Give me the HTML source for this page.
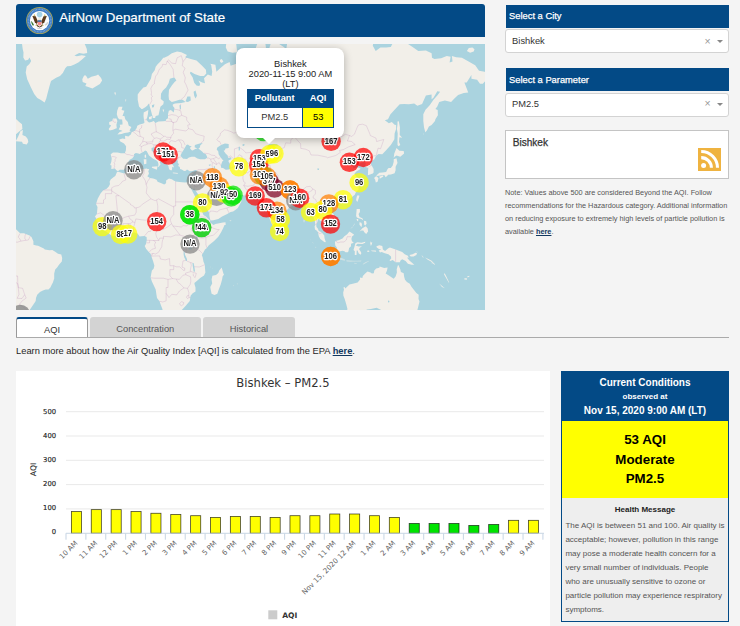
<!DOCTYPE html>
<html lang="en"><head><meta charset="utf-8"><title>AirNow Department of State</title>
<style>
*{box-sizing:border-box;margin:0;padding:0}
html,body{width:740px;height:626px;overflow:hidden;background:#f4f4f4}
body{position:relative;font-family:"Liberation Sans",Arial,Helvetica,sans-serif;color:#333;-webkit-font-smoothing:antialiased}
.abs{position:absolute}
.hdr{left:16px;top:4px;width:469px;height:33px;background:#034a86;border-radius:3px 3px 0 0;color:#fff;font-size:13.33px;line-height:33px}
.hdr span{position:absolute;left:43.2px;top:-2.7px;white-space:nowrap;-webkit-text-stroke:.2px #fff}
.seal{position:absolute;left:9.5px;top:2.5px;transform:translate(-.4px,-.4px)}
.map{position:absolute;left:16px;top:44px;display:block}
.map .geo{filter:blur(.3px)}
.map .lab{filter:blur(.28px)}
.popup{left:236.4px;top:48px;width:108px;height:90.1px;background:#fff;border-radius:8px;box-shadow:0 2px 8px rgba(0,0,0,.28);font-size:9.3px;line-height:10.1px;text-align:center;color:#222}
.popup .tip{position:absolute;left:26.4px;top:89.8px;width:0;height:0;border-left:6.3px solid transparent;border-right:6.3px solid transparent;border-top:6.6px solid #fff}
.popup .txt{position:absolute;left:0;right:0;top:10.5px}
.ptab{position:absolute;left:10.5px;top:41.3px;width:86.9px;height:38.6px;border:1px solid #034a86;background:#fff}
.ptab div{position:absolute;font-size:9.33px;line-height:18px;text-align:center}
.ptab .h{top:-1px;height:18.4px;background:#034a86;color:#fff;font-weight:bold}
.ptab .c1{left:-1px;width:55.6px}
.ptab .c2{left:54.6px;width:31.3px}
.ptab .d{top:17.4px;height:20.2px;line-height:19.6px;color:#333}
.ptab .d.c2{background:#ffff00;color:#000;border-left:1px solid #034a86;width:30.3px;height:19.2px}
.sh{left:505.5px;width:223.5px;height:23px;background:#034a86;color:#fff;font-size:9.33px;line-height:22px;padding-left:3.6px;font-weight:normal;-webkit-text-stroke:.25px #fff}
.sel{left:505.1px;width:224.2px;height:24px;background:#fff;border:1px solid #d3d3d3;border-radius:3px;font-size:9.33px;line-height:20.6px;padding-left:6px;color:#333}
.sel i{position:absolute;right:17.6px;top:-.6px;font-style:normal;color:#999;font-size:10.5px}
.sel b{position:absolute;right:4.9px;top:9.6px;width:0;height:0;border-left:3.1px solid transparent;border-right:3.1px solid transparent;border-top:3.1px solid #888}
.box{left:505.1px;top:130px;width:224.2px;height:48.6px;background:#fff;border:1px solid #c4c4c4;font-size:10.1px;color:#333;-webkit-text-stroke:.25px #333}
.box span{position:absolute;left:6.6px;top:6.3px;line-height:11px}
.rss{position:absolute;left:191.7px;top:17.2px}
.note{left:505px;top:185.9px;width:226px;font-size:7.33px;line-height:13.1px;color:#555;white-space:nowrap}
.note b,.learn b{color:#12385f;text-decoration:underline;font-weight:bold}
.tabline{left:16px;top:337px;width:713px;height:1px;background:#aaa;z-index:3}
.tab{top:317.4px;height:20px;font-size:9.33px;line-height:25.4px;text-align:center;color:#555;background:#d3d3d3;border-radius:3px 3px 0 0}
.tab.on{left:16px;width:72px;background:#fff;border:1px solid #999;border-bottom:0;border-top:2px solid #034a86;color:#333;line-height:22.4px;height:20.6px}
.learn{left:16px;top:344.8px;font-size:9.33px;line-height:13px;color:#262626;white-space:nowrap}
.cpanel{left:16px;top:371px;width:534px;height:255px;background:#fff}
.chart{position:absolute;left:0;top:0}
.cc{left:560.8px;top:370.6px;width:168.4px;height:251.6px;border:1px solid #034a86;background:#eee;text-align:center}
.cc .top{position:absolute;left:-1px;right:-1px;top:-1px;height:51.2px;background:#034a86;color:#fff;font-weight:bold}
.cc .top div{position:absolute;left:0;right:0;white-space:nowrap}
.cc .mid{position:absolute;left:0;right:0;top:49.8px;height:76.8px;background:#ffff00;color:#000;font-size:13.33px;font-weight:bold;line-height:19.1px;padding-top:9.1px}
.cc .hm{position:absolute;left:0;right:0;top:132.4px;font-size:8px;line-height:11px;color:#222;font-weight:bold}
.cc .msg{position:absolute;left:3.6px;top:147.4px;width:170px;text-align:left;font-size:8px;line-height:14.05px;color:#555;white-space:nowrap}
</style></head><body>
<div class="abs hdr"><svg class="seal" width="28" height="28" viewBox="-14 -14 28 28">
<circle r="13.5" fill="#a3a25c"/><circle r="12.65" fill="#3c7ac2"/><circle r="11.3" fill="none" stroke="#79a6da" stroke-width="1.5" stroke-dasharray=".8 .7"/>
<circle r="9.7" fill="#fdfdfd"/>
<circle cx="0" cy="-6" r="2.8" fill="#a5d2e6"/>
<path d="M-7.2,-4.6L-3.9,-4.3L-1.5,1.2L-2.9,3.4L-4.8,1.6Z" fill="#5b3a1c"/>
<path d="M7.2,-4.6L3.9,-4.3L1.5,1.2L2.9,3.4L4.8,1.6Z" fill="#5b3a1c"/>
<path d="M-6.2,-4.8L-5.2,-6.6L-4.2,-4.6ZM6.2,-4.8L5.2,-6.6L4.2,-4.6Z" fill="#cdbb5c"/>
<path d="M-1.3,-2.4H1.3L1.9,1L0,2L-1.9,1Z" fill="#efe9dc"/>
<path d="M-1.9,.9H1.9V3.9Q0,5.7-1.9,3.9Z" fill="#f08a8a"/><rect x="-1.9" y="-.3" width="3.8" height="1.5" fill="#2c5f9e"/>
<path d="M-3.4,3.4L0,6.2L3.4,3.4L2.6,5.6L0,6.8L-2.6,5.6Z" fill="#4a3018"/>
<path d="M-8.5,.2C-7.4,1.4-6.2,3-5.5,4.6L-7,4.8C-7.9,3.6-8.5,2-8.5,.2Z" fill="#3c7d3a"/>
<path d="M5.2,4.4L8.2,1.4M5.8,4.8L8.6,2.6" stroke="#bdbdbd" stroke-width=".7"/>
<path d="M-4,4.8L-2,4.2M4,4.8L2,4.2" stroke="#c9b452" stroke-width=".8"/>
<path d="M-3,6.6Q0,8.4 3,6.6L2.4,7.8Q0,9-2.4,7.8Z" fill="#d4d4d4"/>
</svg><span>AirNow Department of State</span></div>
<svg class="map" width="469" height="266" viewBox="16 44 469 266">
<rect x="16" y="44" width="469" height="266" fill="#aad3df"/>
<g class="geo"><path d="M177.1,51.6L181.3,52.2L187.0,55.0L185.1,57.3L190.8,58.9L196.5,60.5L202.1,65.7L205.9,69.7L206.3,73.6L204.0,76.0L200.2,76.0L194.6,74.1L190.8,71.7L189.8,73.1L192.7,77.4L194.2,82.8L196.5,85.4L199.3,85.9L200.2,84.1L198.4,80.6L202.1,82.4L205.0,83.2L204.0,78.3L207.8,74.6L211.6,76.0L212.2,71.7L211.2,65.2L210.3,63.7L215.4,64.7L216.4,71.7L220.2,68.2L224.9,64.2L229.6,62.1L230.6,65.7L236.3,63.7L242.0,61.6L242.9,57.3L249.6,60.0L253.3,62.6L257.1,64.7L259.0,62.1L255.2,58.3L254.9,50.5L258.1,41.4L260.9,36.2L264.7,38.2L265.9,47.5L266.2,58.9L267.8,65.2L264.7,74.1L268.5,71.7L269.1,64.2L273.3,62.6L276.1,68.7L277.0,66.7L274.2,61.6L269.5,56.1L269.5,47.5L271.4,41.4L276.1,41.4L279.9,44.5L284.6,47.5L285.6,53.3L287.5,55.0L286.5,47.5L287.5,41.4L287.5,-0.1L327.3,-0.1L342.5,16.8L342.5,34.2L352.0,36.2L361.4,34.9L369.0,34.2L373.8,39.5L372.8,45.7L375.7,51.0L380.4,47.5L386.1,47.5L390.8,46.9L393.3,42.0L395.6,39.5L405.0,42.0L412.6,46.9L418.3,51.0L425.9,50.5L431.6,53.3L432.0,57.8L434.4,58.9L441.1,58.3L446.8,56.1L450.6,56.7L449.6,62.6L452.5,61.6L451.9,56.1L456.2,57.3L461.9,57.8L469.5,62.1L475.2,65.2L479.0,70.7L484.7,71.7L489.1,76.0L487.5,78.8L482.8,83.7L480.0,83.7L477.1,79.7L471.4,78.8L471.4,75.0L466.7,82.4L464.4,82.4L466.7,88.4L468.2,92.6L463.8,93.0L458.1,95.0L454.4,98.5L451.1,102.0L444.9,100.5L439.2,102.0L437.3,106.4L435.4,109.0L437.7,110.0L437.9,115.3L435.4,119.3L435.0,120.9L431.6,125.1L428.9,126.4L426.9,130.4L425.3,132.2L424.0,127.3L423.3,120.9L423.3,114.2L425.5,109.7L429.7,105.3L433.5,99.7L437.3,95.4L440.1,91.8L437.3,91.3L433.5,97.8L431.6,99.3L431.6,94.6L425.9,95.4L422.1,103.9L417.4,105.7L414.2,103.5L408.8,104.2L404.1,103.9L399.7,104.2L394.6,109.7L390.3,114.6L388.0,119.3L384.8,120.3L388.9,123.2L391.8,121.9L394.6,124.8L396.1,125.1L396.1,128.9L394.6,133.4L394.4,139.2L390.8,144.9L386.1,150.3L382.3,154.2L378.5,154.0L376.0,156.0L374.3,159.3L370.0,162.3L371.7,165.5L373.6,169.1L373.6,172.6L372.8,173.5L370.0,174.5L367.9,175.2L368.1,170.3L368.3,167.9L365.2,166.7L365.8,163.0L363.9,161.8L360.5,163.0L358.0,164.8L359.2,159.8L357.6,159.6L353.8,163.8L351.4,164.3L352.9,166.7L353.8,168.4L357.3,167.2L360.5,168.4L360.1,169.3L356.3,171.4L354.4,173.8L356.3,176.5L357.6,179.5L359.3,182.8L357.6,184.1L359.5,185.0L358.6,187.2L358.6,189.4L355.7,192.6L354.8,194.7L352.3,196.8L350.1,198.8L347.2,200.5L344.7,201.3L342.5,201.9L339.6,202.9L337.5,203.3L337.4,205.4L336.2,202.9L333.9,202.5L331.1,204.0L329.2,206.0L328.8,208.0L330.1,210.4L332.0,213.0L333.6,214.0L335.3,217.9L335.6,220.8L334.9,222.7L332.0,224.7L330.5,225.6L328.2,227.6L326.9,228.3L327.3,225.6L326.0,224.7L324.5,224.3L323.5,222.7L322.2,221.4L319.7,220.4L319.5,219.1L318.8,218.9L317.8,219.2L317.6,221.8L316.3,224.7L316.5,227.0L317.8,228.5L318.8,231.0L320.7,231.8L322.2,232.9L324.3,235.6L324.5,238.1L325.8,242.0L325.0,242.2L324.3,241.9L322.0,240.3L320.3,239.0L318.8,236.2L318.4,234.3L318.0,232.3L316.9,230.8L315.0,229.5L314.6,226.6L315.2,224.7L315.0,221.8L314.0,217.9L313.5,214.9L313.1,213.0L311.8,212.0L309.3,214.4L307.0,214.0L307.4,211.0L306.4,208.0L305.5,206.0L303.2,204.0L302.3,201.3L299.8,200.9L297.0,202.3L295.1,202.5L293.2,203.3L293.0,204.6L291.8,206.2L289.4,207.4L287.5,209.4L284.3,212.8L282.2,214.2L280.3,214.9L279.9,217.9L280.5,219.8L279.5,221.8L279.5,225.1L278.0,227.0L276.5,227.8L275.2,229.3L273.3,227.6L272.3,224.7L270.8,221.8L270.0,219.8L269.1,216.9L268.1,214.9L267.2,212.0L266.2,208.0L266.1,204.0L265.9,201.3L264.7,203.5L262.8,204.4L260.9,204.0L259.0,201.5L261.5,199.9L258.1,199.2L256.2,197.8L255.2,196.1L254.3,194.9L249.6,195.3L244.8,195.5L240.1,194.9L236.8,194.0L235.9,191.3L235.0,191.3L231.5,192.3L228.7,191.5L225.8,189.6L224.5,187.2L223.0,184.6L221.1,184.1L220.2,185.0L219.2,186.1L220.2,188.3L222.1,191.1L223.4,192.6L223.4,194.7L224.5,196.1L225.3,193.4L226.0,195.1L226.0,197.2L227.7,197.4L230.6,197.4L233.1,195.1L234.6,193.4L235.1,193.0L235.1,195.7L236.3,197.8L239.3,198.6L241.6,200.9L239.5,205.0L237.8,208.0L235.3,210.0L233.1,211.4L230.6,212.0L227.2,214.0L222.1,216.5L218.3,218.9L213.5,220.2L210.7,220.4L210.1,219.2L209.4,215.9L209.2,213.0L207.5,210.0L205.9,207.0L203.3,204.0L202.3,202.9L201.2,198.8L198.9,195.7L197.4,193.2L195.5,190.4L194.2,188.3L194.6,186.1L193.4,189.4L193.0,190.0L191.7,188.3L190.0,185.2L189.4,182.2L192.3,182.6L193.6,181.7L194.4,178.8L195.5,176.3L196.1,172.6L196.8,170.0L195.1,170.0L192.7,171.0L189.8,171.2L187.0,169.6L185.8,170.7L184.1,171.0L181.7,169.6L180.1,169.1L179.8,166.9L178.1,166.0L179.0,164.3L177.7,162.8L177.9,161.3L177.5,160.3L175.6,159.6L173.7,159.8L173.7,161.8L172.8,161.3L171.6,160.6L171.2,163.0L172.2,164.3L173.7,166.2L173.7,167.4L172.2,166.7L172.2,167.9L171.8,170.3L170.7,170.3L169.3,169.6L168.6,167.2L168.4,166.0L167.4,164.8L166.5,162.8L165.0,160.6L165.2,157.5L163.3,155.5L162.3,155.0L159.5,152.9L157.0,151.1L155.7,148.4L154.0,148.9L154.2,147.0L151.5,148.1L151.7,150.8L153.8,152.6L155.1,155.5L158.5,157.0L158.5,158.3L160.4,159.3L163.3,161.3L162.3,162.1L160.4,160.6L159.7,162.3L160.6,164.3L159.5,165.7L158.5,166.9L158.0,166.7L158.5,164.3L157.8,161.8L156.3,160.3L155.1,159.8L152.8,158.6L151.3,157.3L149.0,155.5L147.7,152.9L146.8,151.3L145.1,150.5L143.4,151.9L142.0,152.4L139.6,154.0L138.4,153.4L135.8,152.9L133.9,154.2L134.3,155.8L132.4,158.3L129.7,159.8L127.6,163.0L128.4,164.8L127.1,166.7L124.8,169.1L124.0,169.8L119.8,169.8L117.9,171.2L116.4,170.3L114.9,168.6L111.3,169.1L111.5,165.5L110.2,165.0L111.3,161.8L111.7,158.8L110.7,154.2L113.0,152.4L117.4,152.6L121.0,153.2L124.8,153.2L125.9,150.3L126.1,146.2L124.0,143.5L120.0,141.2L119.3,139.5L122.5,138.4L125.2,139.0L125.0,135.8L128.4,136.4L131.0,134.3L131.6,132.2L134.8,130.7L136.7,127.9L137.3,125.7L139.6,124.5L143.4,123.5L144.5,122.6L143.9,119.3L143.5,115.9L143.7,112.5L148.3,110.0L147.9,114.2L147.2,117.6L146.4,119.3L147.5,121.3L149.0,122.6L151.3,121.9L153.8,120.9L155.3,122.9L158.5,121.6L163.5,121.3L165.7,120.9L166.1,119.6L168.0,118.3L168.0,114.2L168.8,110.8L170.9,110.0L173.7,112.5L174.5,107.9L172.8,106.1L172.8,104.6L175.0,103.5L181.3,103.1L185.5,102.0L182.6,99.7L179.4,99.7L175.6,100.9L171.8,102.0L169.0,99.7L168.6,95.8L169.0,89.7L171.8,85.4L174.6,81.9L176.4,80.6L174.6,77.8L173.9,77.4L169.9,78.8L168.6,83.2L166.1,87.6L162.9,90.5L161.0,93.8L160.8,98.9L163.8,101.6L163.3,104.2L160.4,106.8L159.5,110.8L158.5,115.3L155.7,115.9L155.1,118.0L152.8,118.0L152.5,115.9L151.9,114.2L150.8,110.0L149.4,105.3L148.3,103.5L147.7,105.3L145.3,107.2L142.4,109.0L141.5,109.0L139.0,106.4L138.6,104.2L137.7,99.7L137.7,94.6L139.6,91.8L143.4,87.6L146.2,86.7L148.7,82.4L150.9,78.8L151.9,74.1L154.7,70.2L155.7,66.7L157.6,64.2L160.4,61.6L163.3,57.8L164.2,57.8L168.0,56.1L171.8,53.3ZM189.4,182.2L184.9,182.4L179.4,181.9L175.6,181.5L173.7,180.4L171.8,179.2L169.0,178.6L166.1,180.4L166.1,183.3L164.2,184.4L161.4,183.3L157.6,181.7L156.6,179.7L153.2,178.6L150.0,177.9L147.3,176.3L148.3,174.9L149.0,173.3L148.3,171.4L149.2,169.1L147.5,169.1L146.8,168.4L143.4,169.1L139.6,169.3L133.9,169.6L130.1,170.5L127.1,172.1L124.4,173.5L122.5,173.1L118.1,171.7L117.0,171.9L115.3,176.1L113.8,177.0L110.7,179.5L109.6,181.7L110.0,184.1L108.8,186.5L106.4,188.9L103.5,190.0L100.7,193.2L97.8,198.4L96.0,204.0L97.5,207.0L96.9,214.0L95.0,216.5L96.5,218.9L96.3,221.2L98.6,222.0L99.7,223.9L102.2,226.6L103.2,228.5L104.5,230.6L107.7,232.7L111.1,235.2L114.0,236.3L116.8,235.6L120.6,234.6L124.4,235.6L127.8,234.1L130.5,233.1L134.6,232.5L137.7,233.7L139.6,236.5L141.5,236.3L144.3,236.0L146.6,237.1L146.8,240.0L146.2,242.8L146.0,243.9L144.7,246.0L146.2,249.1L149.0,252.3L150.6,253.8L151.3,256.1L153.2,261.5L154.4,265.7L153.6,268.8L151.9,270.5L151.3,273.5L150.6,277.4L151.9,281.4L153.8,285.4L155.7,289.5L156.3,293.7L157.0,297.9L159.5,301.3L161.0,305.5L162.3,308.8L162.9,311.1L163.1,313.3L166.1,315.2L169.9,313.3L176.7,313.3L179.4,312.2L181.3,310.6L183.2,308.4L186.0,305.5L187.0,304.2L189.8,301.1L190.6,295.8L192.7,293.3L195.5,291.6L195.5,287.5L194.6,284.4L194.4,283.0L197.4,280.4L200.2,278.0L204.0,275.4L205.4,272.5L205.0,268.6L204.8,264.7L203.5,261.8L202.7,257.6L201.8,255.1L203.5,252.3L205.0,249.4L206.9,247.9L208.8,245.3L214.1,240.9L218.3,236.7L221.1,232.3L223.0,228.5L224.5,225.1L225.7,224.9L225.5,222.2L223.0,222.6L219.2,223.3L215.4,224.1L213.5,224.9L210.7,222.7L209.9,222.6L210.3,220.8L208.6,219.2L205.9,216.5L203.5,214.9L201.4,210.0L199.1,208.0L198.7,206.8L198.4,202.9L196.1,198.8L194.2,194.7L192.7,191.9L192.3,191.1L191.1,188.9L189.8,185.2ZM221.7,267.6L223.4,273.5L224.0,274.5L222.6,276.4L222.1,279.4L220.7,284.4L218.8,289.5L217.3,293.7L214.5,294.9L211.6,293.7L210.7,289.5L210.3,287.1L212.2,283.4L211.6,279.4L212.4,275.8L216.0,274.9L218.3,273.1L219.2,270.5ZM117.4,134.6L121.6,134.0L124.4,133.1L128.2,132.5L130.8,131.3L129.5,130.4L131.4,127.0L128.8,125.7L128.2,123.8L127.8,121.9L125.3,119.3L124.4,115.9L122.5,115.9L124.4,110.8L121.6,110.0L122.5,106.8L118.7,106.8L117.2,110.8L116.8,114.2L117.8,117.6L119.1,119.3L122.1,119.6L122.5,122.6L122.5,124.5L119.7,124.8L120.2,126.4L118.7,129.5L121.6,130.4L122.5,131.0L119.7,131.9ZM116.8,128.2L116.4,124.8L117.4,120.9L116.4,118.6L113.0,118.6L112.1,120.9L109.2,121.9L109.2,124.5L111.1,125.4L108.7,128.9L109.6,130.4L113.0,129.8L115.9,128.6ZM225.8,47.5L227.7,51.6L232.5,52.8L237.2,52.2L236.3,44.5L234.4,31.5L226.8,38.2ZM219.8,60.0L221.7,58.9L223.4,61.6L221.7,63.1L220.2,62.1ZM466.9,51.0L468.8,48.1L472.4,47.5L474.5,49.3L473.7,51.6L470.1,52.8ZM393.7,158.1L394.2,153.7L396.5,148.1L399.4,150.8L403.7,151.1L404.1,153.4L400.3,156.8L396.5,155.5L394.6,156.8ZM396.5,158.3L397.5,163.0L395.6,166.7L395.6,170.3L394.6,173.3L393.3,173.8L390.8,174.5L388.0,174.7L387.6,175.4L385.7,177.2L384.2,174.9L380.4,175.4L376.6,176.1L376.6,175.2L379.4,172.8L382.3,172.6L386.1,172.1L387.6,169.1L388.6,167.9L390.8,168.1L392.7,165.5L393.7,161.8L393.7,159.3ZM376.6,176.3L378.5,178.3L377.6,181.7L375.8,182.6L375.1,179.5L374.1,177.9L375.7,176.5ZM379.4,176.5L383.2,175.6L383.2,176.8L381.3,177.7L379.8,178.8ZM397.5,121.6L398.8,121.3L399.9,127.3L399.7,134.9L402.2,137.8L399.4,137.2L399.0,142.1L400.3,144.9L398.4,146.2L397.5,144.9L397.5,139.2L397.7,133.4L396.9,128.9L397.5,124.2ZM357.6,195.3L359.5,195.7L358.6,198.8L357.3,201.9L356.1,199.9L356.7,196.8ZM334.3,207.6L335.8,206.0L338.7,206.0L337.7,208.4L335.8,209.6L334.3,209.0ZM279.9,226.0L282.2,228.5L283.3,230.8L282.4,232.7L280.8,233.5L279.5,231.8L279.5,229.1ZM356.7,209.0L359.9,209.0L359.9,212.0L358.6,214.0L359.5,216.9L362.4,218.3L363.3,220.6L361.4,218.9L358.6,218.3L356.9,217.5L356.1,215.9L356.3,213.4ZM359.5,231.4L362.4,228.3L365.8,226.2L367.7,228.5L368.1,231.4L367.1,232.7L366.2,233.9L364.3,232.3L363.3,230.4L361.4,230.4ZM363.9,220.8L366.2,221.2L366.6,223.7L365.2,225.6L364.3,224.7L364.1,222.7ZM359.5,222.2L361.4,222.7L362.0,224.7L361.4,227.2L360.5,226.0L359.5,224.7ZM350.4,228.7L352.9,226.4L354.8,223.1L354.2,224.9L352.0,227.8ZM356.5,219.1L358.2,219.1L358.2,221.2L357.3,221.0ZM334.9,241.9L335.8,240.9L339.2,240.0L342.5,238.6L344.4,236.2L347.2,234.3L349.5,231.4L351.4,232.7L354.2,234.8L352.0,236.5L351.4,239.0L352.0,241.3L353.8,242.8L351.0,243.8L351.0,246.2L349.1,248.1L348.5,251.3L347.8,252.3L345.5,252.3L344.4,251.2L342.5,250.8L340.2,251.2L337.2,250.2L336.8,247.5L335.3,245.6ZM355.4,243.2L357.3,242.2L361.4,242.8L365.2,241.7L365.2,242.8L362.4,243.9L357.6,243.8L355.7,245.6L358.6,246.6L362.0,246.2L359.5,248.1L359.2,249.4L360.5,251.3L361.4,253.2L360.5,254.8L358.6,253.2L357.6,250.4L356.7,250.4L356.5,255.1L354.8,255.1L354.8,251.3L353.5,250.0L354.4,247.0ZM370.0,240.9L370.9,242.8L372.2,241.9L371.9,244.1L370.9,246.0L370.3,243.8ZM370.9,250.4L375.7,250.4L376.2,251.7L371.9,251.3ZM367.1,250.8L369.0,250.6L369.4,251.7L367.5,251.9ZM376.4,246.2L379.4,245.3L382.3,246.0L382.9,249.4L385.1,251.0L388.0,248.5L389.9,247.5L395.6,249.6L402.2,251.9L404.7,254.2L407.9,255.7L408.7,257.8L406.9,257.6L409.4,260.5L412.3,263.0L414.3,264.7L411.7,264.7L407.9,263.8L405.6,261.1L402.2,259.2L400.5,260.5L399.9,262.2L395.6,262.2L392.7,260.1L390.3,260.9L389.5,260.3L391.2,258.4L391.0,256.5L388.4,254.2L384.8,253.2L381.7,252.1L380.0,252.5L378.7,250.4L381.3,249.6L378.9,248.9L376.8,247.4ZM409.4,255.1L412.6,254.2L415.5,252.7L417.0,252.9L416.4,255.1L413.6,256.5L410.7,256.5ZM414.2,249.6L417.4,251.9L418.3,253.6L417.8,252.7L415.5,250.4ZM421.5,255.1L423.8,257.6L422.7,257.2ZM430.6,262.4L433.1,263.6L432.2,263.4ZM439.2,283.6L443.9,287.5L444.9,288.3L442.0,286.9ZM343.4,287.5L344.7,287.1L345.3,288.5L349.5,284.6L353.8,283.4L357.6,282.4L360.1,279.4L359.9,277.4L362.4,278.0L362.8,276.0L365.2,273.5L367.5,271.5L370.5,272.5L371.9,273.5L373.8,273.3L374.3,270.5L376.2,268.4L379.4,267.8L379.6,266.5L384.2,268.0L387.6,267.6L387.0,270.5L385.7,273.5L388.9,275.4L391.8,277.4L393.7,278.8L395.6,276.4L396.9,272.5L396.7,269.2L397.8,265.5L398.4,265.1L400.3,269.2L400.9,272.1L403.7,273.3L404.1,276.4L405.0,279.8L406.9,282.0L409.8,283.8L411.3,286.5L414.2,290.2L416.4,293.1L418.7,294.7L418.5,299.0L419.5,301.6L418.3,306.6L417.4,309.9L416.0,311.1L414.9,313.1L412.6,320.3L393.7,322.7L389.9,316.8L386.1,315.6L385.1,314.9L382.3,310.6L376.6,307.7L370.9,309.0L367.1,309.5L363.3,311.5L362.4,313.3L355.7,313.3L352.0,315.6L346.6,314.0L347.4,308.8L346.3,304.4L344.7,299.0L343.4,295.8L343.2,292.6L344.0,289.5ZM10.6,227.6L16.3,229.5L20.1,233.3L23.9,233.3L29.6,235.6L31.5,237.1L33.4,241.3L33.4,244.7L36.2,245.6L38.1,245.8L43.8,248.5L44.8,249.4L49.5,250.2L52.3,250.0L55.2,251.7L58.0,253.8L61.3,254.6L62.2,258.2L61.8,261.5L59.0,264.7L57.1,267.6L55.2,269.6L54.2,273.5L54.2,278.4L52.9,282.4L51.8,284.4L50.4,287.5L48.5,289.5L45.7,289.5L42.9,290.6L40.0,292.0L37.2,294.7L36.0,297.9L35.7,301.1L33.4,304.4L30.5,308.8L27.7,312.6L25.8,318.0L6.8,318.0ZM6.8,115.9L13.5,117.6L16.3,119.3L19.2,121.9L22.0,124.2L22.4,128.9L20.1,130.7L16.3,134.0L6.8,134.9ZM15.7,141.2L18.2,136.4L20.5,131.0L22.9,130.1L22.4,134.9L25.8,136.6L27.7,139.0L28.3,142.1L26.7,144.6L22.9,143.8L22.0,141.8ZM151.9,166.7L157.6,166.2L156.8,169.8L151.9,167.7ZM143.7,159.3L146.4,159.3L146.4,163.8L144.1,164.3ZM144.5,155.5L146.0,154.2L146.2,157.5L144.9,158.1ZM172.8,172.6L178.1,173.1L177.5,173.8L172.9,173.3ZM189.4,173.8L193.8,172.1L192.7,174.0L190.2,174.7ZM229.3,220.6L231.5,220.6L230.6,221.2ZM114.2,92.6L115.9,92.6L115.3,95.4ZM125.3,99.3L126.3,99.7L125.7,102.0ZM162.7,109.3L164.2,109.7L163.1,112.5ZM149.0,117.0L152.1,115.9L151.5,119.3L149.0,119.3ZM423.1,133.4L424.0,134.0L423.6,134.6ZM304.0,218.9L304.5,220.8L304.0,222.7L303.6,220.8ZM425.0,257.4L428.8,259.2L431.6,260.7L435.0,264.3L434.4,264.7L431.0,261.5L427.8,259.7ZM444.1,272.9L445.4,274.5L447.3,278.6L449.2,282.4L448.7,282.6L446.4,278.4L444.1,274.5ZM464.4,278.2L466.9,278.2L466.9,279.8L464.4,279.6ZM467.2,276.4L469.5,275.8L469.1,277.0L467.2,277.2ZM21.5,42.8L22.1,44.6L22.7,48.9L23.5,52.5L23.3,57.4L25.1,60.4L28.2,59.8L29.4,57.4L31.2,61.0L29.4,64.1L26.7,66.5L25.7,72.6L27.2,79.3L29.4,84.1L30.6,86.8L34.2,93.9L37.3,98.1L40.9,99.9L44.6,102.6L46.2,98.7L47.4,93.9L49.4,86.6L51.0,81.1L56.1,77.8L60.0,75.9L62.8,72.9L65.3,68.3L67.1,66.3L70.7,65.9L74.4,64.4L78.3,62.5L81.7,59.8L85.9,55.9L81.7,55.2L76.8,56.2L74.4,55.6L79.2,53.1L83.5,53.7L87.2,53.1L86.8,48.9L85.3,45.2L84.1,42.8ZM82.3,79.3L84.1,75.6L85.9,75.4L87.8,78.7L91.4,76.8L96.3,75.4L98.1,74.6L101.1,78.1L102.1,80.5L99.9,84.1L95.7,86.6L92.4,88.4L89.0,87.2L85.3,86.0L86.5,83.5L82.7,81.9Z" fill="#f2efe9"/>
<path d="M328.8,256.7L330.7,256.3L333.9,257.2L337.7,257.6L341.9,258.0L345.1,259.5L344.9,260.7L341.5,260.1L336.8,259.3L333.9,259.0L330.1,258.2ZM346.3,260.3L350.1,260.5L353.8,260.7L357.6,260.7L361.4,260.5L361.1,261.5L355.7,261.6L350.1,261.8L346.6,261.5ZM362.4,264.3L365.2,262.2L369.0,260.7L368.6,261.6L365.2,263.6L363.3,264.5ZM353.8,262.8L356.7,263.2L356.7,264.1L354.2,263.6ZM315.2,246.6L316.3,247.5L316.1,248.3L315.4,247.4ZM312.3,242.0L313.6,243.0L313.3,243.6L312.5,242.8ZM309.9,239.4L311.0,240.0L310.6,240.3ZM232.9,285.2L234.0,285.4L233.6,286.3L233.1,285.9ZM236.8,283.6L237.8,283.6L237.6,284.4L237.0,284.2ZM210.1,266.5L210.7,266.8L210.5,267.4L210.1,267.2ZM212.0,267.8L212.6,268.0L212.6,268.4L212.0,268.2Z" fill="#f2efe9" fill-opacity=".5"/>
<path d="M124.0,173.5L125.0,177.2L125.9,179.9L122.5,181.3L121.2,183.0L118.7,185.5L114.9,186.1L111.7,187.8L111.7,190.9M111.7,190.0L103.2,190.0M111.7,190.9L111.7,193.6L105.4,193.6L105.4,198.8L103.5,199.9L103.5,203.3L96.0,203.3M111.7,190.9L119.1,195.7L130.5,203.8L130.5,204.6L134.1,206.6L134.4,208.0L136.2,207.8M119.1,195.7L115.9,195.7L117.8,214.9L110.2,215.1L106.4,214.7L105.1,216.3M96.9,214.0L100.7,212.8L103.5,214.9L105.1,216.3L106.6,221.0M96.5,218.7L99.7,218.3L102.0,219.1L99.7,219.4L96.5,219.6M96.5,221.2L99.7,220.8L102.2,220.6L106.6,221.0L111.1,221.0L113.0,225.3L112.5,230.2L114.0,236.3M99.7,223.9L102.2,222.4L102.2,220.6M103.0,227.6L107.9,228.9L106.4,231.6M107.9,228.9L108.7,228.5L112.3,230.2M113.0,225.3L116.8,225.3L117.8,224.9L118.3,222.0L120.6,219.4L124.4,217.5L128.6,216.1L130.1,215.9L134.8,215.1L136.2,212.2L136.2,207.8M123.1,235.0L122.1,231.8L123.1,226.6L122.9,223.7M117.8,224.9L122.9,226.4M122.9,223.7L128.2,223.5L129.9,223.7L132.7,222.0L132.4,220.6L129.9,218.9L128.6,216.1M130.5,233.1L129.3,229.5L128.9,225.6L128.2,223.5M131.2,232.9L131.2,227.6L129.9,223.7M133.3,232.5L133.5,227.6L135.0,222.4L132.7,222.0M135.0,222.4L135.8,218.9L141.5,219.8L145.3,220.2L150.9,219.4L154.0,218.5M136.2,207.8L139.6,207.0L142.4,204.2L150.9,198.8L155.1,200.7L156.6,199.9L158.5,198.8L173.7,207.0L173.7,206.0L175.6,206.0L175.6,201.9L175.6,181.5M150.9,198.8L146.2,193.0L147.0,187.2L146.2,184.6L145.3,180.6L143.9,178.3L142.4,176.1L143.9,173.8L144.5,169.3M146.2,184.6L147.7,181.3L150.0,177.9M156.6,199.9L157.8,206.0L157.6,212.4L154.0,218.5L155.1,221.0L156.6,223.7L154.7,225.6L157.6,226.0L157.0,230.4M155.1,221.0L153.2,225.6L150.6,231.4L148.1,231.6L145.3,235.2L144.3,236.0M173.7,207.0L173.7,214.5L170.9,217.9L170.3,220.4L171.6,223.7M157.0,230.4L163.3,229.5L168.0,226.6L171.6,223.7L172.9,226.0L174.6,227.9L180.1,235.2M157.0,230.4L155.7,233.5L156.6,237.1L158.9,240.5M158.9,240.5L159.7,238.1L163.5,238.1L163.5,236.3L170.9,236.9L175.6,235.0L180.1,235.2L184.1,236.3L186.8,238.1L188.9,237.9L192.7,236.7L194.6,234.4M172.9,226.0L178.4,226.6L181.3,227.0L183.2,225.6L187.0,226.0L189.6,222.4L191.1,221.4L191.0,224.3L192.9,226.6M175.6,201.9L187.7,201.9L198.2,201.9M201.4,210.0L198.4,212.0L197.4,215.9L196.8,220.2L194.6,223.7L192.9,226.6L190.8,229.5L193.6,232.0L194.6,234.4L196.5,236.2L200.2,237.9L203.1,238.1L205.9,237.3L205.9,244.7L206.9,247.9M197.4,217.3L201.2,216.9L204.6,217.1L208.6,220.8L207.5,223.7L209.5,223.9L210.7,226.8L213.5,228.3L217.3,229.5L219.2,229.5L213.5,235.2L209.7,236.0L207.8,236.7L205.9,237.3M209.5,223.9L210.3,222.7M192.7,236.7L193.6,242.8L192.5,244.5L192.5,246.6L199.5,250.4L202.5,253.6M186.8,238.1L187.5,240.7L184.5,243.2L184.3,247.4L186.0,246.6L186.6,249.3L185.8,252.3L183.9,253.1M184.3,247.4L183.2,249.8L183.8,251.3M183.2,249.8L186.6,249.3M187.0,261.1L190.6,262.6L192.5,263.0M194.0,266.7L199.3,267.0L204.8,264.7M151.3,256.1L153.0,253.4L155.5,254.0L158.5,252.3L161.8,246.6L162.1,242.8L162.5,240.5L163.5,238.1M146.8,240.3L149.6,240.3L153.4,240.5L158.9,240.5M149.6,240.3L149.6,242.8L146.4,242.8M153.4,240.5L155.7,242.0L154.5,244.7L155.5,248.3L151.9,249.3L149.2,252.1M150.9,254.2L153.0,253.4M151.3,256.1L159.7,255.9L160.4,259.0L165.2,259.9L169.5,258.6L169.9,265.7L173.7,265.7L173.7,269.6L169.9,269.6L169.9,275.8L172.6,278.6L168.0,279.4L163.3,278.2L154.7,278.2L150.6,277.8M173.7,265.7L176.2,266.8L179.8,266.8L183.2,270.3L184.7,270.3L184.7,268.0L182.0,267.2L182.6,263.4L183.0,260.9L186.6,260.3M172.6,278.6L176.2,279.0L179.4,279.4L183.0,275.2L185.8,274.7L185.5,273.1L191.1,271.5L190.2,270.7L190.8,267.6L191.3,265.3L190.6,262.6M191.1,271.5L193.6,272.5L196.3,273.3L195.1,277.6L193.4,276.0L193.2,273.5M185.8,274.7L190.6,276.8L190.8,281.4L190.2,284.4L187.5,288.3M176.2,279.0L177.9,282.4L180.7,284.4L183.9,287.9L187.5,288.3L188.9,292.6L188.7,295.6L189.1,297.5L190.6,297.7M168.0,279.4L168.0,287.5L166.1,287.5L166.1,293.3L166.1,300.9M166.1,293.3L169.0,297.5L171.8,294.3L176.7,294.9L179.4,291.0L183.9,287.9M159.5,301.3L161.2,301.6L162.7,302.0L166.1,300.9M179.6,303.5L181.7,301.6L183.8,302.6L183.4,304.4L181.5,305.7L180.0,304.8L179.6,303.5M188.7,295.6L187.0,295.8L186.6,297.5L187.5,298.5L189.1,297.5M193.2,182.2L194.4,186.1L195.5,181.7L195.7,179.0L194.8,178.1M195.7,179.0L198.0,179.9L201.8,177.4L205.9,175.2L206.5,172.4L208.6,168.8M195.7,177.7L197.4,174.9L196.5,174.7M196.5,171.7L197.8,169.8L200.2,169.6L204.0,169.6L208.6,168.8L213.1,168.6M194.4,186.1L196.5,186.8L199.3,185.0L198.4,181.7L202.1,180.6L201.8,177.4M202.1,180.6L204.8,180.8L207.8,182.6L213.0,186.8L216.4,187.0L218.6,188.3L220.0,188.3M216.4,187.0L218.3,185.0L219.2,185.0M220.2,185.0L218.6,182.8L218.8,179.9L215.4,178.3L214.5,174.9L215.8,172.1L214.3,171.4L213.1,168.6L212.0,165.7L212.4,163.3L213.1,162.6L211.1,161.6L210.7,159.1L208.8,158.1L206.9,158.1M204.0,153.2L208.8,153.7L211.6,155.2L214.9,155.5L216.4,157.3L218.8,158.8L220.4,157.3M210.7,159.1L213.5,158.6L216.4,157.3M213.5,158.6L214.5,160.3L216.4,163.0L216.4,164.5M213.1,162.6L216.4,164.5L219.2,162.6L220.9,165.7M209.4,213.2L210.3,211.0L213.5,211.2L217.3,212.0L219.2,210.0L226.8,208.0L232.5,206.0L233.8,201.9L232.9,200.5L227.9,200.1L226.0,197.4M226.8,208.0L228.9,212.8M233.8,201.9L234.4,197.8L235.1,195.9M224.5,196.1L225.3,196.5L226.0,196.5M230.4,168.4L234.4,166.4L238.2,167.4L240.6,167.9L244.2,170.0L244.1,173.1L243.1,175.4L242.9,178.3L243.7,181.7L245.4,182.8L243.7,185.5L245.4,188.1L247.3,191.1L248.2,192.1L245.4,194.0L245.0,195.3M244.2,172.4L247.7,172.8L250.5,170.7L254.3,168.1L257.1,169.1L260.0,167.9L261.3,167.7L263.8,166.0L264.0,169.8L267.6,168.1L270.2,168.6M243.7,185.5L247.7,186.3L253.9,185.2L254.7,182.4L259.6,180.8L260.0,178.1L261.5,177.4L263.0,175.8L264.0,171.7L264.0,169.8M257.5,198.4L262.8,197.0L260.9,193.8L261.5,189.6L266.4,188.5L268.3,185.0L269.7,182.6L269.5,179.0L268.5,177.2L268.5,174.5L274.2,173.3L275.7,172.6M270.2,168.6L272.3,171.4L275.7,172.6L278.0,175.4L277.4,179.2L277.6,182.4L281.8,184.6L283.7,184.8L287.5,187.4L291.3,189.4L295.3,189.6L296.6,189.4L297.9,189.1L301.7,189.6L302.8,189.8L306.4,186.8L310.2,186.3L312.7,188.9M281.8,184.6L280.1,187.6L283.7,189.6L287.5,190.6L290.9,192.3L295.3,192.8L295.3,189.6M296.6,189.4L296.8,191.7L298.9,192.1L302.8,191.7L302.8,189.8M295.3,192.8L297.0,193.2L298.5,195.1L303.4,195.7L303.0,197.4L301.1,198.6L301.9,200.1L303.2,201.9L303.8,203.3L303.2,204.6M295.3,192.8L295.3,195.9L296.4,197.2L296.8,200.1L297.0,202.3M312.7,188.9L312.1,190.4L308.7,192.3L307.6,195.3L306.6,198.0L305.1,197.8L305.3,201.5L303.8,203.3M312.7,188.9L315.4,190.4L315.4,194.0L313.3,196.1L313.1,198.0L315.7,199.5L316.3,201.7L317.8,202.7L319.9,202.7L321.8,201.1L324.1,200.3L327.9,199.2L330.5,200.3L333.0,202.9M319.9,202.7L318.0,205.2L315.9,206.0L313.6,208.8L313.5,210.4L315.2,213.8L314.4,215.7L316.3,219.4L317.1,222.2L315.4,225.3M321.8,201.1L323.9,204.4L327.1,205.6L325.4,207.2L327.7,209.0L330.3,212.8L331.9,215.5L332.2,216.5L332.0,220.8L329.2,222.4L328.8,223.7L326.4,224.9M318.0,205.2L320.1,207.0L319.9,211.0L321.8,209.6L325.2,209.4L326.9,211.2L326.9,213.2L328.2,214.5L328.2,216.9L329.2,217.1L332.2,216.5M328.2,216.9L323.5,217.5L322.6,218.7L323.3,222.2M318.0,232.3L319.7,233.7L321.8,232.9M336.0,240.9L337.7,243.0L340.6,242.0L344.0,242.0L346.3,240.0L347.2,236.7L351.2,236.7M395.6,249.6L395.6,262.0M294.7,137.2L300.6,143.8L300.8,148.4L305.5,149.2L309.3,150.8L311.0,155.0L317.8,155.2L326.4,157.0L327.3,157.8L335.8,155.5L340.4,152.4L339.4,150.5L343.6,149.5L348.2,147.0L355.2,144.6L351.6,141.5L347.4,141.0L349.5,135.5M294.7,137.2L298.3,134.9L303.4,132.5L307.0,133.1L312.7,135.5L314.6,133.4L315.7,128.6L322.0,131.0L323.5,134.0L329.2,133.7L334.1,136.9L338.3,137.2L342.5,136.1L345.3,134.3L349.5,135.5L351.6,136.4L354.4,134.3L357.3,127.0L358.6,124.8L362.6,124.2L366.4,125.7L370.0,134.3L370.2,135.5L376.0,138.1L376.6,141.5L380.4,140.4L383.8,139.5L380.6,148.7L378.1,148.1L377.2,151.6L376.6,154.5L375.8,155.8L374.1,155.8L370.9,156.8L371.5,158.3L368.8,157.3L367.1,159.6L364.1,161.8M368.5,167.2L370.0,166.0L371.7,165.2M294.7,137.2L293.7,137.5L290.9,139.5L290.7,143.2L285.6,142.9L284.3,147.6L280.7,148.9L281.4,153.7L280.3,156.3L277.0,158.3L274.0,159.3L272.9,160.8L270.0,160.6L268.1,162.3L267.8,163.3L268.1,165.2L270.2,165.5L270.2,168.6M293.7,137.5L289.8,136.1L286.5,131.9L282.7,132.5L279.9,132.5L275.9,124.8L273.3,121.9L267.6,122.6L263.2,121.9L262.8,118.6L259.0,118.0L251.8,121.3L244.8,122.9L243.9,127.9L242.0,131.9L245.0,131.0L241.0,133.1L239.3,131.9L233.8,133.1L231.5,131.9L227.7,130.4L224.5,129.8L220.5,133.1L220.0,135.5L216.9,139.5L218.1,141.2L219.6,141.5L221.1,144.6M234.4,148.9L239.3,147.3L243.9,150.5L245.8,152.9L251.3,152.4L253.5,154.2L253.3,155.8L254.3,156.8L257.3,159.3L259.2,158.3L261.3,156.3L262.8,156.0L262.6,155.2L267.6,155.5L267.8,154.0L269.1,153.7L271.9,154.5L278.4,154.7L280.3,156.3M227.7,157.3L230.6,156.0L233.4,158.6L234.4,158.6L234.4,148.9M234.4,158.6L236.5,158.6L239.3,154.7L242.0,156.3L242.0,158.8L245.6,159.1L246.5,161.8L249.9,164.5L254.3,168.1M257.1,169.1L256.8,162.8L259.6,159.8L261.9,161.1L262.8,161.3L267.8,163.3M262.8,161.3L264.3,158.8L261.3,156.3M111.5,157.0L112.6,156.5L115.7,157.0L116.4,157.8L115.1,159.3L115.1,161.3L114.0,162.8L114.9,164.0L114.3,165.7L114.7,166.2L114.0,167.9L114.2,168.6M124.8,153.2L126.9,154.5L129.5,154.7L131.4,155.5L134.3,155.8M132.9,131.6L136.2,134.0L137.5,135.5L139.2,136.4L140.3,136.4L143.7,137.8L142.6,141.8L139.6,145.7L141.1,146.2L141.5,146.5L141.1,148.7L141.5,151.1L142.4,152.1M134.6,130.7L136.3,130.7L139.4,131.6L139.6,132.5L139.9,134.6L140.3,136.4M139.6,132.5L139.6,129.2L141.5,127.9L141.8,125.1M144.7,119.6L147.0,120.0M155.1,122.9L155.9,127.0L156.1,130.4L156.6,131.9L155.3,131.9L151.1,134.0L151.9,135.2L154.4,138.4L152.8,139.8L152.8,142.1L151.3,141.8L148.1,142.1L146.4,142.1L144.5,141.5L142.6,141.8M156.6,131.9L159.1,133.1L160.4,133.7L163.8,136.4L165.2,136.1L166.3,137.2L171.0,137.5L171.2,136.1L173.7,133.1L172.9,130.4L172.9,127.0L173.5,122.6L171.4,121.3L165.7,121.3M171.4,121.3L172.8,122.6L176.5,121.9L178.6,117.0L181.7,115.3L180.7,111.1L180.1,110.4L180.7,103.9M168.0,115.6L171.8,114.6L175.6,115.3L178.6,117.0M174.3,109.3L177.5,109.7L180.1,110.4M171.4,121.3L171.2,119.3L168.6,118.6M141.5,146.5L144.3,145.1L145.8,144.9L148.1,143.8L151.3,143.5L154.2,144.9L153.6,146.2L154.2,147.3M146.4,142.1L146.4,143.2L148.1,143.8M154.2,144.9L158.5,144.3L159.5,141.5L160.6,140.7L160.2,139.0L156.6,137.8L154.4,138.4M160.2,139.0L162.3,137.8L163.8,136.4M160.6,140.7L163.8,141.2L167.1,139.2L170.1,139.5L171.0,137.5M158.5,144.3L159.7,144.9L163.8,146.5L166.7,145.7L168.4,145.1L170.1,141.2L171.6,140.7L175.4,141.5L178.6,139.8L181.7,140.1L183.4,141.0L185.1,145.1M178.6,139.8L181.5,144.0L181.7,147.6L184.5,148.4M154.2,147.3L157.2,147.6L159.7,144.9M157.2,147.6L158.2,148.4L158.5,151.1L161.4,154.2M158.2,148.4L160.4,148.4L164.2,149.2L165.0,150.8L165.2,152.6L163.3,155.5M163.8,146.5L164.2,149.2L166.7,145.7M164.2,149.2L168.8,149.5L171.2,151.1L175.6,152.4L179.4,151.3L182.4,152.4M168.4,145.1L168.8,149.5M171.2,151.1L170.7,154.2L170.7,156.0L171.8,158.6L174.6,158.3L177.5,158.3L178.3,157.5L181.3,156.8M165.2,152.6L166.7,154.7L167.3,156.8L167.1,159.3L168.0,159.8L171.6,158.8L171.8,158.6M165.0,157.0L167.3,156.8L170.7,156.0M166.7,154.7L169.1,156.0L169.5,153.7L170.7,154.2M167.1,159.3L166.1,162.6M177.5,160.1L178.3,157.5M183.0,61.6L182.2,65.7L185.1,68.2L183.2,72.2L185.3,77.8L184.5,81.9L186.0,84.6L188.1,90.1L184.5,96.6L180.9,99.7M173.9,77.4L173.1,69.2L169.9,64.2L167.3,61.0L168.6,60.0L171.8,63.1L175.6,63.7L177.1,57.8L179.4,56.7L181.3,55.6L183.0,61.6L186.6,57.3M149.2,105.3L150.8,102.7L151.9,100.5L151.3,97.8L152.5,96.2L151.1,95.0L151.5,92.6L150.9,88.4L152.3,85.4L154.9,83.2L154.2,82.8L155.7,76.0L157.4,74.1L159.3,69.2L162.1,66.7L162.7,64.2L166.1,64.7L167.3,61.0M181.7,115.3L186.8,117.3L186.6,120.0L190.2,124.5L187.7,125.1L188.5,128.6L192.9,129.8L195.7,133.7L200.2,135.2L204.2,136.1L203.5,141.0L200.6,143.2M172.9,130.4L175.6,129.2L180.3,130.1L186.0,131.0L188.5,128.6M114.3,119.3L112.6,120.9L114.3,122.2L116.2,122.2M19.9,233.5L18.2,237.1L19.5,238.4L21.0,241.1M25.8,233.9L25.0,235.8L24.8,238.2L25.8,240.3M30.2,236.2L28.4,240.0L25.8,240.3L21.0,241.1L17.3,242.2L14.8,242.0L14.4,240.0L15.0,236.3L13.1,234.8M19.0,304.8L22.0,306.1L26.7,309.9L26.9,312.6M17.8,283.8L18.4,287.7L22.6,288.3L24.7,294.7L22.0,298.5L17.1,298.3L19.0,294.5L17.8,283.8M24.7,294.7L26.2,298.1L22.4,300.7L19.0,304.8M14.4,276.0L17.6,276.0L17.8,283.8L15.4,282.2L10.6,282.6" fill="none" stroke="#a255a2" stroke-opacity=".27" stroke-width=".65" stroke-linejoin="round"/>
<path d="M183.2,158.8L181.3,156.8L180.5,155.5L181.3,153.7L182.6,151.6L184.5,148.4L186.4,144.9L187.9,144.6L189.8,146.0L191.7,146.2L189.8,147.9L191.7,150.3L192.7,150.5L195.3,148.9L197.4,148.4L194.6,147.3L194.9,145.1L198.0,144.0L200.8,143.2L202.7,142.9L200.2,145.4L199.9,147.6L198.4,148.4L199.9,149.7L202.1,151.6L203.5,152.9L205.9,154.2L207.1,156.8L207.1,157.8L205.0,159.3L203.5,159.3L200.2,159.3L197.4,158.6L194.6,156.8L191.7,156.8L188.9,157.5L187.0,159.1L184.1,158.8ZM217.3,147.6L221.1,144.9L224.9,143.5L228.7,144.0L228.7,148.1L225.5,148.4L224.9,150.3L223.6,150.8L225.8,153.7L227.7,155.5L228.1,158.1L231.0,157.3L231.5,159.3L228.7,160.3L228.5,161.8L229.6,163.0L230.2,165.5L230.6,168.4L228.7,169.6L225.8,169.8L223.0,168.1L221.1,167.7L220.9,165.7L221.7,163.0L222.6,161.1L223.6,160.8L222.1,159.3L220.2,156.8L218.6,154.2L218.3,151.6L216.7,149.5ZM242.9,144.0L244.8,144.6L243.9,146.0L242.3,145.4ZM238.7,146.8L240.1,146.8L239.9,150.0L238.9,151.1L238.6,148.9ZM267.6,145.4L269.5,144.0L272.3,144.0L277.0,144.3L278.0,145.4L274.2,145.4L270.4,145.7L268.5,147.6ZM272.9,155.5L276.1,155.0L276.1,156.3L273.8,156.3ZM325.0,130.1L327.3,130.4L331.1,127.3L334.9,123.2L336.8,117.6L335.3,116.6L333.0,120.9L329.2,125.7L326.4,128.9ZM185.5,101.6L187.4,96.6L190.4,96.6L190.8,100.5L187.9,102.0ZM193.6,91.8L195.5,90.5L197.0,95.8L195.5,98.5L194.2,95.8ZM151.9,105.3L154.4,104.2L153.8,107.2L152.1,107.5ZM188.5,245.6L189.8,244.1L192.7,244.1L193.0,246.6L191.7,249.4L188.9,249.4L188.3,247.5ZM183.6,251.3L184.5,251.3L185.1,255.1L187.0,259.0L187.0,261.3L185.8,260.5L184.1,257.1L183.6,254.2ZM192.5,263.0L193.6,263.0L194.4,266.7L194.9,270.5L194.6,272.1L193.6,271.5L193.2,268.6L192.7,265.7ZM196.1,236.2L197.0,236.5L197.6,239.6L196.8,239.8ZM153.4,218.9L155.7,218.9L156.1,220.2L153.8,220.2ZM213.7,166.4L214.7,166.0L215.2,168.4L214.1,168.6ZM208.8,164.8L210.7,164.3L210.3,165.7L209.0,165.7ZM317.3,168.6L319.1,168.6L319.0,170.0L317.4,169.8ZM324.8,219.2L326.2,220.4L325.6,221.0L324.6,219.8ZM179.4,105.3L180.9,105.3L180.9,109.0L180.0,109.3ZM388.0,300.5L389.5,300.9L389.1,302.6L388.0,302.2Z" fill="#aad3df"/>
</g><g class="lab" font-family="Liberation Sans, Arial, sans-serif" font-size="7.6" font-weight="bold" text-anchor="middle" fill="#1c1c1c" stroke="#fff" stroke-width="2.3" stroke-linejoin="round" paint-order="stroke"><g stroke="none"><circle cx="20.4" cy="314.4" r="9.7" fill="#858585" fill-opacity=".78"/><circle cx="263.6" cy="131.6" r="9.7" fill="#00e400" fill-opacity=".72"/><circle cx="133.9" cy="169.7" r="9.7" fill="#858585" fill-opacity=".72"/><circle cx="163.1" cy="152.0" r="9.7" fill="#ff0000" fill-opacity=".72"/><circle cx="168.3" cy="155.1" r="9.7" fill="#ff0000" fill-opacity=".72"/><circle cx="196.3" cy="180.7" r="9.7" fill="#858585" fill-opacity=".72"/><circle cx="212.4" cy="177.7" r="9.7" fill="#ff7e00" fill-opacity=".72"/><circle cx="216.7" cy="196.3" r="9.7" fill="#858585" fill-opacity=".72"/><circle cx="219.2" cy="186.4" r="9.7" fill="#ff7e00" fill-opacity=".72"/><circle cx="224.1" cy="193.2" r="9.7" fill="#ffff00" fill-opacity=".72"/><circle cx="231.3" cy="196.9" r="9.7" fill="#00e400" fill-opacity=".72"/><circle cx="233.1" cy="195.3" r="9.7" fill="#00e400" fill-opacity=".72"/><circle cx="202.5" cy="202.9" r="9.7" fill="#ffff00" fill-opacity=".72"/><circle cx="238.9" cy="166.8" r="9.7" fill="#ffff00" fill-opacity=".72"/><circle cx="259.4" cy="158.6" r="9.7" fill="#ff0000" fill-opacity=".72"/><circle cx="258.7" cy="165.3" r="9.7" fill="#ff0000" fill-opacity=".72"/><circle cx="269.7" cy="154.5" r="9.7" fill="#ffff00" fill-opacity=".72"/><circle cx="274.0" cy="153.7" r="9.7" fill="#ffff00" fill-opacity=".72"/><circle cx="263.8" cy="176.1" r="9.7" fill="#00e400" fill-opacity=".72"/><circle cx="259.4" cy="174.9" r="9.7" fill="#ff7e00" fill-opacity=".72"/><circle cx="269.1" cy="181.7" r="9.7" fill="#7e0023" fill-opacity=".72"/><circle cx="266.7" cy="176.8" r="9.7" fill="#ff7e00" fill-opacity=".72"/><circle cx="274.6" cy="188.1" r="9.7" fill="#7e0023" fill-opacity=".72"/><circle cx="255.2" cy="196.0" r="9.7" fill="#ff0000" fill-opacity=".72"/><circle cx="290.1" cy="190.0" r="9.7" fill="#ff7e00" fill-opacity=".72"/><circle cx="290.1" cy="190.0" r="9.7" fill="#ff7e00" fill-opacity=".72"/><circle cx="295.7" cy="200.7" r="9.7" fill="#858585" fill-opacity=".72"/><circle cx="299.6" cy="198.2" r="9.7" fill="#ff0000" fill-opacity=".72"/><circle cx="277.0" cy="211.2" r="9.7" fill="#ff7e00" fill-opacity=".72"/><circle cx="266.4" cy="207.8" r="9.7" fill="#ff0000" fill-opacity=".72"/><circle cx="280.4" cy="219.7" r="9.7" fill="#ffff00" fill-opacity=".72"/><circle cx="279.6" cy="231.5" r="9.7" fill="#ffff00" fill-opacity=".72"/><circle cx="331.1" cy="141.4" r="9.7" fill="#ff0000" fill-opacity=".72"/><circle cx="349.4" cy="162.3" r="9.7" fill="#ff0000" fill-opacity=".72"/><circle cx="363.3" cy="157.5" r="9.7" fill="#ff0000" fill-opacity=".72"/><circle cx="359.1" cy="182.7" r="9.7" fill="#ffff00" fill-opacity=".72"/><circle cx="343.0" cy="199.7" r="9.7" fill="#ffff00" fill-opacity=".72"/><circle cx="310.6" cy="212.4" r="9.7" fill="#ffff00" fill-opacity=".72"/><circle cx="328.9" cy="203.9" r="9.7" fill="#ff7e00" fill-opacity=".72"/><circle cx="322.8" cy="210.1" r="9.7" fill="#ffff00" fill-opacity=".72"/><circle cx="330.5" cy="224.1" r="9.7" fill="#ff0000" fill-opacity=".72"/><circle cx="330.7" cy="256.5" r="9.7" fill="#ff7e00" fill-opacity=".72"/><circle cx="330.7" cy="256.5" r="9.7" fill="#ff7e00" fill-opacity=".72"/><circle cx="189.8" cy="214.7" r="9.7" fill="#00e400" fill-opacity=".72"/><circle cx="189.8" cy="214.7" r="9.7" fill="#00e400" fill-opacity=".72"/><circle cx="201.7" cy="227.6" r="9.7" fill="#858585" fill-opacity=".72"/><circle cx="201.7" cy="227.6" r="9.7" fill="#00e400" fill-opacity=".72"/><circle cx="190.0" cy="244.1" r="9.7" fill="#858585" fill-opacity=".72"/><circle cx="102.2" cy="226.6" r="9.7" fill="#ffff00" fill-opacity=".72"/><circle cx="113.0" cy="220.6" r="9.7" fill="#858585" fill-opacity=".72"/><circle cx="120.6" cy="234.5" r="9.7" fill="#ffff00" fill-opacity=".72"/><circle cx="127.8" cy="234.1" r="9.7" fill="#ffff00" fill-opacity=".72"/><circle cx="156.7" cy="221.6" r="9.7" fill="#ff0000" fill-opacity=".72"/></g><text transform="translate(133.9 171.8) scale(1 1.17)">N/A</text><text transform="translate(163.1 154.1) scale(1 1.17)">171</text><text transform="translate(168.3 157.2) scale(1 1.17)">151</text><text transform="translate(196.3 182.8) scale(1 1.17)">N/A</text><text transform="translate(212.4 179.8) scale(1 1.17)">118</text><text transform="translate(216.7 198.4) scale(1 1.17)">N/A</text><text transform="translate(219.2 188.5) scale(1 1.17)">130</text><text transform="translate(224.1 195.3) scale(1 1.17)">92</text><text transform="translate(231.3 199.0) scale(1 1.17)">57</text><text transform="translate(233.1 197.4) scale(1 1.17)">50</text><text transform="translate(202.5 205.0) scale(1 1.17)">80</text><text transform="translate(238.9 168.9) scale(1 1.17)">78</text><text transform="translate(259.4 160.7) scale(1 1.17)">153</text><text transform="translate(258.7 167.4) scale(1 1.17)">154</text><text transform="translate(269.7 156.6) scale(1 1.17)">53</text><text transform="translate(274.0 155.8) scale(1 1.17)">96</text><text transform="translate(259.4 177.0) scale(1 1.17)">103</text><text transform="translate(269.1 183.8) scale(1 1.17)">377</text><text transform="translate(266.7 178.9) scale(1 1.17)">105</text><text transform="translate(274.6 190.2) scale(1 1.17)">510</text><text transform="translate(255.2 198.1) scale(1 1.17)">169</text><text transform="translate(290.1 192.1) scale(1 1.17)">123</text><text transform="translate(295.7 202.8) scale(1 1.17)">N/A</text><text transform="translate(299.6 200.3) scale(1 1.17)">160</text><text transform="translate(277.0 213.3) scale(1 1.17)">134</text><text transform="translate(266.4 209.9) scale(1 1.17)">171</text><text transform="translate(280.4 221.8) scale(1 1.17)">58</text><text transform="translate(279.6 233.6) scale(1 1.17)">74</text><text transform="translate(331.1 143.5) scale(1 1.17)">167</text><text transform="translate(349.4 164.4) scale(1 1.17)">153</text><text transform="translate(363.3 159.6) scale(1 1.17)">172</text><text transform="translate(359.1 184.8) scale(1 1.17)">96</text><text transform="translate(343.0 201.8) scale(1 1.17)">81</text><text transform="translate(310.6 214.5) scale(1 1.17)">63</text><text transform="translate(328.9 206.0) scale(1 1.17)">128</text><text transform="translate(322.8 212.2) scale(1 1.17)">80</text><text transform="translate(330.5 226.2) scale(1 1.17)">152</text><text transform="translate(330.7 258.6) scale(1 1.17)">106</text><text transform="translate(189.8 216.8) scale(1 1.17)">38</text><text transform="translate(201.7 229.7) scale(1 1.17)">N/A</text><text transform="translate(201.7 229.7) scale(1 1.17)">44</text><text transform="translate(190.0 246.2) scale(1 1.17)">N/A</text><text transform="translate(102.2 228.7) scale(1 1.17)">98</text><text transform="translate(113.0 222.7) scale(1 1.17)">N/A</text><text transform="translate(120.6 236.6) scale(1 1.17)">88</text><text transform="translate(127.8 236.2) scale(1 1.17)">17</text><text transform="translate(156.7 223.7) scale(1 1.17)">154</text></g>
</svg>
<div class="abs popup"><div class="txt">Bishkek<br>2020-11-15 9:00 AM<br>(LT)</div>
<div class="ptab"><div class="h c1">Pollutant</div><div class="h c2">AQI</div><div class="d c1">PM2.5</div><div class="d c2">53</div></div>
<div class="tip"></div></div>

<div class="abs sh" style="top:5px">Select a City</div>
<div class="abs sel" style="top:29.2px;line-height:22.4px">Bishkek<i>×</i><b></b></div>
<div class="abs sh" style="top:68.1px;line-height:25.4px">Select a Parameter</div>
<div class="abs sel" style="top:92.8px;line-height:21.4px">PM2.5<i>×</i><b></b></div>
<div class="abs box"><span>Bishkek</span><svg class="rss" width="23" height="23" viewBox="0 0 23 23"><rect width="23" height="23" fill="#efb340"/>
<circle cx="5.6" cy="17.4" r="2.5" fill="#fff"/>
<path d="M3.2,9.6a10.2,10.2 0 0 1 10.2,10.2" fill="none" stroke="#fff" stroke-width="3.1"/>
<path d="M3.2,3.5a16.3,16.3 0 0 1 16.3,16.3" fill="none" stroke="#fff" stroke-width="3.1"/></svg></div>
<div class="abs note">Note: Values above 500 are considered Beyond the AQI. Follow<br>recommendations for the Hazardous category. Additional information<br>on reducing exposure to extremely high levels of particle pollution is<br>available <b>here</b>.</div>

<div class="abs tabline"></div>
<div class="abs tab on">AQI</div>
<div class="abs tab" style="left:90px;width:110.5px">Concentration</div>
<div class="abs tab" style="left:203px;width:92px">Historical</div>
<div class="abs learn">Learn more about how the Air Quality Index [AQI] is calculated from the EPA <b>here</b>.</div>

<div class="abs cpanel"><svg class="chart" width="534" height="255" viewBox="16 371 534 255"><g font-family="DejaVu Sans, Liberation Sans, sans-serif"><text x="283" y="386.6" font-size="11.6" text-anchor="middle" fill="#333">Bishkek – PM2.5</text><text x="56.1" y="534" font-size="6.8" text-anchor="end" fill="#222" stroke="#222" stroke-width=".15">0</text><rect x="66" y="508.40" width="478" height="1" fill="#e9e9e9"/><text x="56.1" y="510" font-size="6.8" text-anchor="end" fill="#222" stroke="#222" stroke-width=".15">100</text><rect x="66" y="484.10" width="478" height="1" fill="#e9e9e9"/><text x="56.1" y="486" font-size="6.8" text-anchor="end" fill="#222" stroke="#222" stroke-width=".15">200</text><rect x="66" y="459.80" width="478" height="1" fill="#e9e9e9"/><text x="56.1" y="462" font-size="6.8" text-anchor="end" fill="#222" stroke="#222" stroke-width=".15">300</text><rect x="66" y="435.50" width="478" height="1" fill="#e9e9e9"/><text x="56.1" y="438" font-size="6.8" text-anchor="end" fill="#222" stroke="#222" stroke-width=".15">400</text><rect x="66" y="411.20" width="478" height="1" fill="#e9e9e9"/><text x="56.1" y="414" font-size="6.8" text-anchor="end" fill="#222" stroke="#222" stroke-width=".15">500</text><text transform="translate(35.7 469.5) rotate(-90)" font-size="7.7" text-anchor="middle" fill="#222" stroke="#222" stroke-width=".1">AQI</text><rect x="71.39" y="511.57" width="10.1" height="21.63" fill="#ffff00" stroke="#000" stroke-opacity=".72" stroke-width=".8"/><rect x="91.26" y="509.63" width="10.1" height="23.57" fill="#ffff00" stroke="#000" stroke-opacity=".72" stroke-width=".8"/><rect x="111.13" y="509.63" width="10.1" height="23.57" fill="#ffff00" stroke="#000" stroke-opacity=".72" stroke-width=".8"/><rect x="131.00" y="511.57" width="10.1" height="21.63" fill="#ffff00" stroke="#000" stroke-opacity=".72" stroke-width=".8"/><rect x="150.87" y="513.27" width="10.1" height="19.93" fill="#ffff00" stroke="#000" stroke-opacity=".72" stroke-width=".8"/><rect x="170.74" y="514.49" width="10.1" height="18.71" fill="#ffff00" stroke="#000" stroke-opacity=".72" stroke-width=".8"/><rect x="190.61" y="515.70" width="10.1" height="17.50" fill="#ffff00" stroke="#000" stroke-opacity=".72" stroke-width=".8"/><rect x="210.48" y="517.41" width="10.1" height="15.80" fill="#ffff00" stroke="#000" stroke-opacity=".72" stroke-width=".8"/><rect x="230.35" y="516.43" width="10.1" height="16.77" fill="#ffff00" stroke="#000" stroke-opacity=".72" stroke-width=".8"/><rect x="250.22" y="516.43" width="10.1" height="16.77" fill="#ffff00" stroke="#000" stroke-opacity=".72" stroke-width=".8"/><rect x="270.09" y="517.41" width="10.1" height="15.80" fill="#ffff00" stroke="#000" stroke-opacity=".72" stroke-width=".8"/><rect x="289.96" y="515.70" width="10.1" height="17.50" fill="#ffff00" stroke="#000" stroke-opacity=".72" stroke-width=".8"/><rect x="309.84" y="515.70" width="10.1" height="17.50" fill="#ffff00" stroke="#000" stroke-opacity=".72" stroke-width=".8"/><rect x="329.71" y="514.00" width="10.1" height="19.20" fill="#ffff00" stroke="#000" stroke-opacity=".72" stroke-width=".8"/><rect x="349.58" y="514.00" width="10.1" height="19.20" fill="#ffff00" stroke="#000" stroke-opacity=".72" stroke-width=".8"/><rect x="369.45" y="515.70" width="10.1" height="17.50" fill="#ffff00" stroke="#000" stroke-opacity=".72" stroke-width=".8"/><rect x="389.32" y="517.41" width="10.1" height="15.80" fill="#ffff00" stroke="#000" stroke-opacity=".72" stroke-width=".8"/><rect x="409.19" y="523.48" width="10.1" height="9.72" fill="#00e400" stroke="#000" stroke-opacity=".72" stroke-width=".8"/><rect x="429.06" y="523.48" width="10.1" height="9.72" fill="#00e400" stroke="#000" stroke-opacity=".72" stroke-width=".8"/><rect x="448.93" y="523.48" width="10.1" height="9.72" fill="#00e400" stroke="#000" stroke-opacity=".72" stroke-width=".8"/><rect x="468.80" y="525.42" width="10.1" height="7.78" fill="#00e400" stroke="#000" stroke-opacity=".72" stroke-width=".8"/><rect x="488.67" y="524.45" width="10.1" height="8.75" fill="#00e400" stroke="#000" stroke-opacity=".72" stroke-width=".8"/><rect x="508.54" y="520.32" width="10.1" height="12.88" fill="#ffff00" stroke="#000" stroke-opacity=".72" stroke-width=".8"/><rect x="528.41" y="520.32" width="10.1" height="12.88" fill="#ffff00" stroke="#000" stroke-opacity=".72" stroke-width=".8"/><rect x="66" y="532.80" width="478" height=".9" fill="#c0d0e0"/><rect x="65.45" y="533.20" width="1.1" height="6.5" fill="#cbd8e6"/><rect x="85.32" y="533.20" width="1.1" height="6.5" fill="#cbd8e6"/><rect x="105.19" y="533.20" width="1.1" height="6.5" fill="#cbd8e6"/><rect x="125.06" y="533.20" width="1.1" height="6.5" fill="#cbd8e6"/><rect x="144.93" y="533.20" width="1.1" height="6.5" fill="#cbd8e6"/><rect x="164.80" y="533.20" width="1.1" height="6.5" fill="#cbd8e6"/><rect x="184.67" y="533.20" width="1.1" height="6.5" fill="#cbd8e6"/><rect x="204.55" y="533.20" width="1.1" height="6.5" fill="#cbd8e6"/><rect x="224.42" y="533.20" width="1.1" height="6.5" fill="#cbd8e6"/><rect x="244.29" y="533.20" width="1.1" height="6.5" fill="#cbd8e6"/><rect x="264.16" y="533.20" width="1.1" height="6.5" fill="#cbd8e6"/><rect x="284.03" y="533.20" width="1.1" height="6.5" fill="#cbd8e6"/><rect x="303.90" y="533.20" width="1.1" height="6.5" fill="#cbd8e6"/><rect x="323.77" y="533.20" width="1.1" height="6.5" fill="#cbd8e6"/><rect x="343.64" y="533.20" width="1.1" height="6.5" fill="#cbd8e6"/><rect x="363.51" y="533.20" width="1.1" height="6.5" fill="#cbd8e6"/><rect x="383.38" y="533.20" width="1.1" height="6.5" fill="#cbd8e6"/><rect x="403.25" y="533.20" width="1.1" height="6.5" fill="#cbd8e6"/><rect x="423.12" y="533.20" width="1.1" height="6.5" fill="#cbd8e6"/><rect x="443.00" y="533.20" width="1.1" height="6.5" fill="#cbd8e6"/><rect x="462.87" y="533.20" width="1.1" height="6.5" fill="#cbd8e6"/><rect x="482.74" y="533.20" width="1.1" height="6.5" fill="#cbd8e6"/><rect x="502.61" y="533.20" width="1.1" height="6.5" fill="#cbd8e6"/><rect x="522.48" y="533.20" width="1.1" height="6.5" fill="#cbd8e6"/><rect x="542.35" y="533.20" width="1.1" height="6.5" fill="#cbd8e6"/><text transform="translate(78.04 543.60) rotate(-45)" font-size="7.15" text-anchor="end" fill="#666">10 AM</text><text transform="translate(97.91 543.60) rotate(-45)" font-size="7.15" text-anchor="end" fill="#666">11 AM</text><text transform="translate(117.78 543.60) rotate(-45)" font-size="7.15" text-anchor="end" fill="#666">12 PM</text><text transform="translate(137.65 543.60) rotate(-45)" font-size="7.15" text-anchor="end" fill="#666">1 PM</text><text transform="translate(157.52 543.60) rotate(-45)" font-size="7.15" text-anchor="end" fill="#666">2 PM</text><text transform="translate(177.39 543.60) rotate(-45)" font-size="7.15" text-anchor="end" fill="#666">3 PM</text><text transform="translate(197.26 543.60) rotate(-45)" font-size="7.15" text-anchor="end" fill="#666">4 PM</text><text transform="translate(217.13 543.60) rotate(-45)" font-size="7.15" text-anchor="end" fill="#666">5 PM</text><text transform="translate(237.00 543.60) rotate(-45)" font-size="7.15" text-anchor="end" fill="#666">6 PM</text><text transform="translate(256.87 543.60) rotate(-45)" font-size="7.15" text-anchor="end" fill="#666">7 PM</text><text transform="translate(276.74 543.60) rotate(-45)" font-size="7.15" text-anchor="end" fill="#666">8 PM</text><text transform="translate(296.61 543.60) rotate(-45)" font-size="7.15" text-anchor="end" fill="#666">9 PM</text><text transform="translate(316.49 543.60) rotate(-45)" font-size="7.15" text-anchor="end" fill="#666">10 PM</text><text transform="translate(336.36 543.60) rotate(-45)" font-size="7.15" text-anchor="end" fill="#666">11 PM</text><text transform="translate(356.23 543.60) rotate(-45)" font-size="7.15" text-anchor="end" fill="#666">Nov 15, 2020 12 AM</text><text transform="translate(376.10 543.60) rotate(-45)" font-size="7.15" text-anchor="end" fill="#666">1 AM</text><text transform="translate(395.97 543.60) rotate(-45)" font-size="7.15" text-anchor="end" fill="#666">2 AM</text><text transform="translate(415.84 543.60) rotate(-45)" font-size="7.15" text-anchor="end" fill="#666">3 AM</text><text transform="translate(435.71 543.60) rotate(-45)" font-size="7.15" text-anchor="end" fill="#666">4 AM</text><text transform="translate(455.58 543.60) rotate(-45)" font-size="7.15" text-anchor="end" fill="#666">5 AM</text><text transform="translate(475.45 543.60) rotate(-45)" font-size="7.15" text-anchor="end" fill="#666">6 AM</text><text transform="translate(495.32 543.60) rotate(-45)" font-size="7.15" text-anchor="end" fill="#666">7 AM</text><text transform="translate(515.19 543.60) rotate(-45)" font-size="7.15" text-anchor="end" fill="#666">8 AM</text><text transform="translate(535.06 543.60) rotate(-45)" font-size="7.15" text-anchor="end" fill="#666">9 AM</text><rect x="268.3" y="610.3" width="9" height="9" fill="#ccc"/><text x="282.2" y="617.9" font-size="7.6" font-weight="bold" fill="#333">AQI</text></g></svg></div>

<div class="abs cc">
<div class="top"><div style="top:6.2px;font-size:10px;line-height:12px">Current Conditions</div><div style="top:21.3px;font-size:8px;line-height:10px">observed at</div><div style="top:34.3px;font-size:10px;line-height:12px">Nov 15, 2020 9:00 AM (LT)</div></div>
<div class="mid">53 AQI<br>Moderate<br>PM2.5</div>
<div class="hm">Health Message</div>
<div class="msg">The AQI is between 51 and 100. Air quality is<br>acceptable; however, pollution in this range<br>may pose a moderate health concern for a<br>very small number of individuals. People<br>who are unusually sensitive to ozone or<br>particle pollution may experience respiratory<br>symptoms.</div>
</div>
</body></html>
